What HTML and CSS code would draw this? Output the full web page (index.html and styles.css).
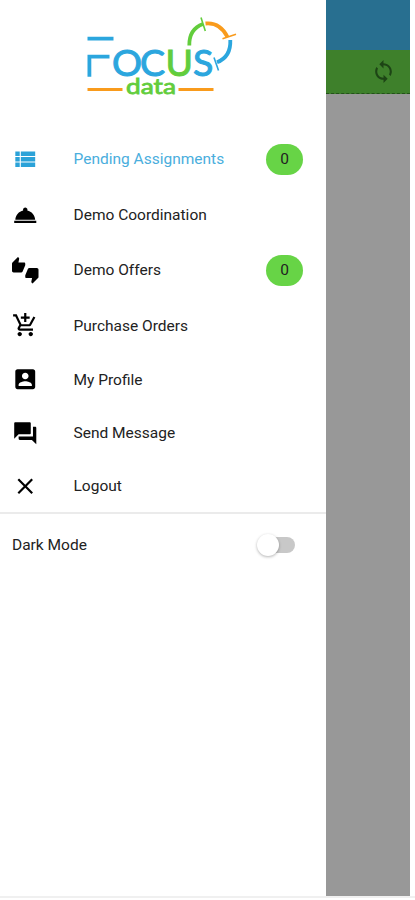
FILE: index.html
```html
<!DOCTYPE html>
<html lang="en">
<head>
<meta charset="utf-8">
<title>Focus Data</title>
<link rel="stylesheet" href="styles.css">
</head>
<body>
<div class="app">
  <aside class="drawer">
    <svg class="logo" viewBox="75 5 170 100" role="img" aria-label="Focus data">
      <g class="stroke blue">
        <path d="M87.5 38.7H113.5M109.5 56.7H89.4V76.7"/>
        <path d="M230.3 40Q231 57 217 62.3"/>
        <path class="thin" d="M214 57.5L218.5 70.5"/>
      </g>
      <g class="stroke green">
        <path d="M189.3 45.5Q189 29 203 24"/>
        <path class="thin" d="M201 17.5L205.3 31"/>
      </g>
      <g class="stroke orange">
        <path d="M205.5 23.5Q220 22 227.5 37"/>
        <path class="thin" d="M222.5 38.8L236 34.3"/>
        <path class="rule" d="M87.5 89.5H122.5M178.5 89.5H213.5"/>
      </g>
      <text class="word" y="75.7"><tspan class="b" x="112">O</tspan><tspan class="b" x="140">C</tspan><tspan class="g" x="165.6">U</tspan><tspan class="b" x="193">S</tspan></text>
      <text class="data" x="126" y="94.3" textLength="50" lengthAdjust="spacingAndGlyphs">data</text>
    </svg>
    <nav class="menu">
      <a class="item active"><svg class="icon" viewBox="0 0 24 24"><path d="M3 14h4v-4H3v4zm0 5h4v-4H3v4zM3 9h4V5H3v4zm5 5h13v-4H8v4zm0 5h13v-4H8v4zM8 5v4h13V5H8z"/></svg><span class="label">Pending Assignments</span><span class="badge">0</span></a>
      <a class="item"><svg class="icon" viewBox="0 0 24 24"><path d="M2 17h20v2H2zm11.84-9.21c.1-.24.16-.51.16-.79 0-1.1-.9-2-2-2s-2 .9-2 2c0 .28.06.55.16.79C6.25 8.6 3.27 11.93 3 16h18c-.27-4.07-3.25-7.4-7.16-8.21z"/></svg><span class="label">Demo Coordination</span></a>
      <a class="item"><svg class="icon" viewBox="0 0 24 24"><path d="M12 6c0-.55-.45-1-1-1H5.82l.66-3.18.02-.23c0-.31-.13-.59-.33-.8L5.38 0 .44 4.94C.17 5.21 0 5.59 0 6v6.5c0 .83.67 1.5 1.5 1.5h6.75c.62 0 1.15-.38 1.38-.91l2.26-5.29c.07-.17.11-.36.11-.55V6zm10.5 4h-6.75c-.62 0-1.15.38-1.38.91l-2.26 5.29c-.07.17-.11.36-.11.55V18c0 .55.45 1 1 1h5.18l-.66 3.18-.02.24c0 .31.13.59.33.8l.79.78 4.94-4.94c.27-.27.44-.65.44-1.06v-6.5c0-.83-.67-1.5-1.5-1.5z"/></svg><span class="label">Demo Offers</span><span class="badge">0</span></a>
      <a class="item"><svg class="icon" viewBox="0 0 24 24"><path d="M11 9h2V6h3V4h-3V1h-2v3H8v2h3v3zm-4 9c-1.1 0-1.99.9-1.99 2S5.9 22 7 22s2-.9 2-2-.9-2-2-2zm10 0c-1.1 0-1.99.9-1.99 2s.89 2 1.99 2 2-.9 2-2-.9-2-2-2zm-9.83-3.25l.03-.12.9-1.63h7.45c.75 0 1.41-.41 1.75-1.03l3.86-7.01L19.42 4h-.01l-1.1 2-2.76 5H8.53l-.13-.27L6.16 6l-.95-2-.94-2H1v2h2l3.6 7.59-1.35 2.45c-.16.28-.25.61-.25.96 0 1.1.9 2 2 2h12v-2H7.42c-.13 0-.25-.11-.25-.25z"/></svg><span class="label">Purchase Orders</span></a>
      <a class="item short"><svg class="icon" viewBox="0 0 24 24"><path d="M3 5v14c0 1.1.89 2 2 2h14c1.1 0 2-.9 2-2V5c0-1.1-.9-2-2-2H5c-1.11 0-2 .9-2 2zm12 4c0 1.66-1.34 3-3 3s-3-1.34-3-3 1.34-3 3-3 3 1.34 3 3zm-9 8c0-2 4-3.1 6-3.1s6 1.1 6 3.1v1H6v-1z"/></svg><span class="label">My Profile</span></a>
      <a class="item short"><svg class="icon" viewBox="0 0 24 24"><path d="M21 6h-2v9H6v2c0 .55.45 1 1 1h11l4 4V7c0-.55-.45-1-1-1zm-4 6V3c0-.55-.45-1-1-1H3c-.55 0-1 .45-1 1v14l4-4h10c.55 0 1-.45 1-1z"/></svg><span class="label">Send Message</span></a>
      <a class="item short"><svg class="icon" viewBox="0 0 24 24"><path d="M19 6.41L17.59 5 12 10.59 6.41 5 5 6.41 10.59 12 5 17.59 6.41 19 12 13.41 17.59 19 19 17.59 13.41 12z"/></svg><span class="label">Logout</span></a>
    </nav>
    <div class="setting"><span>Dark Mode</span><span class="toggle"><span class="knob"></span></span></div>
  </aside>
  <main class="page">
    <div class="topbar"></div>
    <div class="toolbar"><svg class="sync" viewBox="0 0 24 24"><path d="M12 4V1L8 5l4 4V6c3.31 0 6 2.69 6 6 0 1.01-.25 1.97-.7 2.8l1.46 1.46C19.54 15.03 20 13.57 20 12c0-4.42-3.58-8-8-8zm0 14c-3.31 0-6-2.69-6-6 0-1.01.25-1.97.7-2.8L5.24 7.74C4.46 8.97 4 10.43 4 12c0 4.42 3.58 8 8 8v3l4-4-4-4v3z"/></svg></div>
  </main>
</div>
</body>
</html>
```
FILE: styles.css
```css
* { box-sizing: border-box; }
body {
  margin: 0;
  height: 900px;
  overflow: hidden;
  background: #fff;
  font-family: Roboto, "Liberation Sans", sans-serif;
  font-size: 15.5px;
  color: #222;
}
.app {
  display: flex;
  width: 409.5px;
  height: 896px;
}
body::after {
  content: "";
  display: block;
  height: 2px;
  background: #f0f0f0;
}
.drawer {
  width: 326px;
  flex: none;
  display: flex;
  flex-direction: column;
  background: #fff;
}
.logo {
  display: block;
  flex: none;
  width: 170px;
  height: 100px;
  margin: 5px 0 26.5px 75px;
}
.stroke { fill: none; stroke-width: 3.8; }
.thin { stroke-width: 1.6; }
.rule { stroke-width: 2.8; }
.blue { stroke: #2ba6de; }
.green { stroke: #62cd3c; }
.orange { stroke: #f99b1c; }
.word { font: 400 37.5px Lato, sans-serif; stroke-width: 1; }
.b { fill: #2ba6de; stroke: #2ba6de; }
.g { fill: #62cd3c; stroke: #62cd3c; }
.data { font: 400 22px Lato, sans-serif; fill: #62cd3c; stroke: #62cd3c; stroke-width: .8; }
.menu {
  height: 382.5px;
  flex: none;
  border-bottom: 2px solid #ebebeb;
}
.item {
  display: flex;
  align-items: center;
  height: 55.5px;
  padding: 0 23px 0 12px;
}
.item:nth-child(4) { height: 55px; }
.item.short { height: 53.2px; }
.icon {
  width: 26.5px;
  height: 26.5px;
  margin-right: 35px;
  flex: none;
  fill: #000;
}
.label { flex: 1; }
.active .label { color: #4aaedd; }
.active .icon { fill: #2ba2d8; }
.badge {
  width: 37px;
  height: 31px;
  border-radius: 15.5px;
  background: #67d446;
  line-height: 31px;
  text-align: center;
}
.setting {
  display: flex;
  align-items: center;
  justify-content: space-between;
  height: 62px;
  padding: 0 31.5px 0 12px;
}
.toggle {
  display: flex;
  align-items: center;
  width: 35px;
  height: 16px;
  border-radius: 8px;
  background: #c8c8c8;
}
.knob {
  flex: none;
  width: 22px;
  height: 22px;
  margin-left: -3px;
  border-radius: 50%;
  background: #fff;
  box-shadow: 0 1px 3px rgba(0, 0, 0, .3);
}
.page {
  flex: 1;
  background: #989898;
}
.topbar { height: 49.5px; background: #286f90; }
.toolbar {
  display: flex;
  align-items: center;
  justify-content: flex-end;
  height: 44px;
  padding-right: 14px;
  background: #3e802b;
  border-bottom: 1.5px dashed #235219;
}
.sync { width: 25px; height: 25px; fill: #1d4415; }
```
